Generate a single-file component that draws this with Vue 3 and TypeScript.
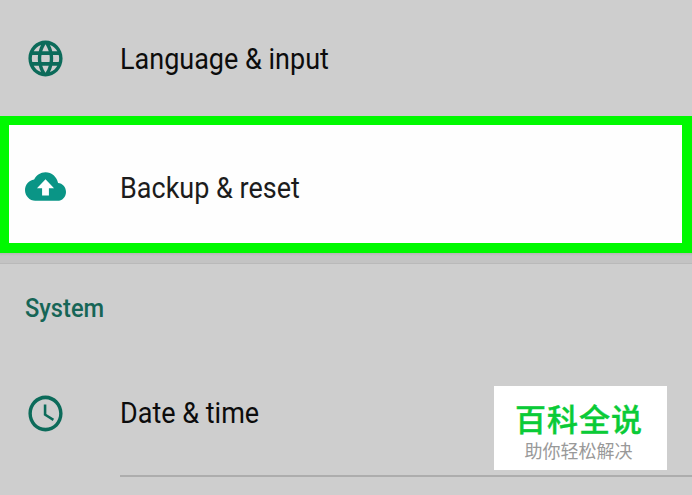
<script setup lang="ts">
interface SettingsItem {
  id: string;
  label: string;
  icon: string;
}

const language: SettingsItem = {
  id: 'language',
  label: 'Language & input',
  icon: 'M11.99 2C6.47 2 2 6.48 2 12s4.47 10 9.99 10C17.52 22 22 17.52 22 12S17.52 2 11.99 2zm6.93 6h-2.95c-.32-1.25-.78-2.45-1.38-3.56 1.84.63 3.37 1.91 4.33 3.56zM12 4.04c.83 1.2 1.48 2.53 1.91 3.96h-3.82c.43-1.43 1.08-2.76 1.91-3.96zM4.26 14C4.1 13.36 4 12.69 4 12s.1-1.36.26-2h3.38c-.08.66-.14 1.32-.14 2s.06 1.34.14 2H4.26zm.82 2h2.95c.32 1.25.78 2.45 1.38 3.56-1.84-.63-3.37-1.9-4.33-3.56zm2.95-8H5.08c.96-1.66 2.49-2.93 4.33-3.56C8.81 5.55 8.35 6.75 8.03 8zM12 19.96c-.83-1.2-1.48-2.53-1.91-3.96h3.82c-.43 1.43-1.08 2.76-1.91 3.96zM14.34 14H9.66c-.09-.66-.16-1.32-.16-2s.07-1.35.16-2h4.68c.09.65.16 1.32.16 2s-.07 1.34-.16 2zm.25 5.56c.6-1.11 1.06-2.31 1.38-3.56h2.95c-.96 1.65-2.49 2.93-4.33 3.56zM16.36 14c.08-.66.14-1.32.14-2s-.06-1.34-.14-2h3.38c.16.64.26 1.31.26 2s-.1 1.36-.26 2h-3.38z',
};

const backup: SettingsItem = {
  id: 'backup',
  label: 'Backup & reset',
  icon: 'M19.35 10.04C18.67 6.59 15.64 4 12 4 9.11 4 6.6 5.64 5.35 8.04 2.34 8.36 0 10.91 0 14c0 3.31 2.69 6 6 6h13c2.76 0 5-2.24 5-5 0-2.64-2.05-4.78-4.65-4.96zM14 13v4h-4v-4H7l5-5 5 5h-3z',
};

const dateTime: SettingsItem = {
  id: 'date',
  label: 'Date & time',
  icon: 'M11.99 2C6.47 2 2 6.48 2 12s4.47 10 9.99 10C17.52 22 22 17.52 22 12S17.52 2 11.99 2zM12 20c-4.42 0-8-3.58-8-8s3.58-8 8-8 8 3.58 8 8-3.58 8-8 8zM12.5 7H11v6l5.25 3.15.75-1.23-4.5-2.67z',
};
</script>

<template>
  <main class="settings">
    <div class="row row-language">
      <svg class="icon" viewBox="0 0 24 24" preserveAspectRatio="none">
        <path :d="language.icon" />
      </svg>
      <span class="label">{{ language.label }}</span>
    </div>

    <!-- Highlighted row -->
    <div class="row row-backup">
      <svg class="icon" viewBox="0 0 24 24" preserveAspectRatio="none">
        <path :d="backup.icon" />
      </svg>
      <span class="label">{{ backup.label }}</span>
    </div>

    <div class="section-gap"></div>
    <h2 class="section-title"><span>System</span></h2>

    <div class="row row-date">
      <svg class="icon" viewBox="0 0 24 24" preserveAspectRatio="none">
        <path :d="dateTime.icon" />
      </svg>
      <span class="label">{{ dateTime.label }}</span>
    </div>
    <div class="divider"></div>

    <!-- Watermark over the list -->
    <aside class="watermark">
      <strong class="brand">百科全说</strong>
      <span class="slogan">助你轻松解决</span>
    </aside>
  </main>
</template>

<style>
body {
  margin: 0;
  background: #cecece;
}
</style>

<style scoped>
.settings {
  position: relative;
  width: 692px;
  height: 495px;
  overflow: hidden;
  background: #cecece;
  font-family: Roboto, sans-serif;
}

.row {
  display: flex;
  align-items: center;
  box-sizing: border-box;
  padding-left: 25px;
}

.row-language {
  height: 116px;
}

.icon {
  flex: none;
  width: 41px;
  height: 43px;
  margin-right: 54px;
  fill: #0c6b5a;
}

.label {
  font-size: 29px;
  line-height: 34px;
  color: #0c0c0c;
  white-space: nowrap;
  transform-origin: left center;
  transform: scaleX(0.931);
}

.row-language .label {
  padding-top: 1px;
}

/* Backup row */
.row-backup {
  height: 137px;
  padding-top: 4px;
  padding-left: 16px;
  border: solid #00f900;
  border-width: 9px 10px 10px 9px;
  background: #fefefe;
}

.row-backup .icon {
  fill: #0a9586;
}

.row-backup .label {
  padding-top: 3px;
  color: #1c1c1c;
}

/* System section */
.section-gap {
  box-sizing: border-box;
  height: 11px;
  border-bottom: 1px solid #b9b9b9;
  background: linear-gradient(#b5b5b5, #c3c3c3 3px);
}

.section-title {
  height: 88px;
  margin: 0;
  padding-left: 25px;
  font-size: 25px;
  font-weight: 500;
  line-height: 89px;
  color: #166556;
}

.section-title span {
  display: inline-block;
  transform-origin: left center;
  transform: scaleX(0.945);
}

.row-date {
  height: 123px;
}

.row-date .label {
  padding-bottom: 1px;
}

.divider {
  height: 2px;
  margin-left: 120px;
  background: #adadad;
}

/* Watermark */
.watermark {
  position: absolute;
  top: 386px;
  left: 494px;
  display: flex;
  flex-direction: column;
  align-items: center;
  box-sizing: border-box;
  width: 173px;
  height: 84px;
  padding-top: 14px;
  padding-right: 3px;
  background: #fff;
  font-family: "Noto Sans CJK SC", sans-serif;
}

.brand {
  font-size: 31px;
  font-weight: 500;
  line-height: 36px;
  letter-spacing: 1px;
  color: #0acb37;
  -webkit-text-stroke: 0.4px #0acb37;
}

.slogan {
  margin-top: 2px;
  padding-right: 1px;
  font-size: 18px;
  line-height: 24px;
  color: #999;
}
</style>
